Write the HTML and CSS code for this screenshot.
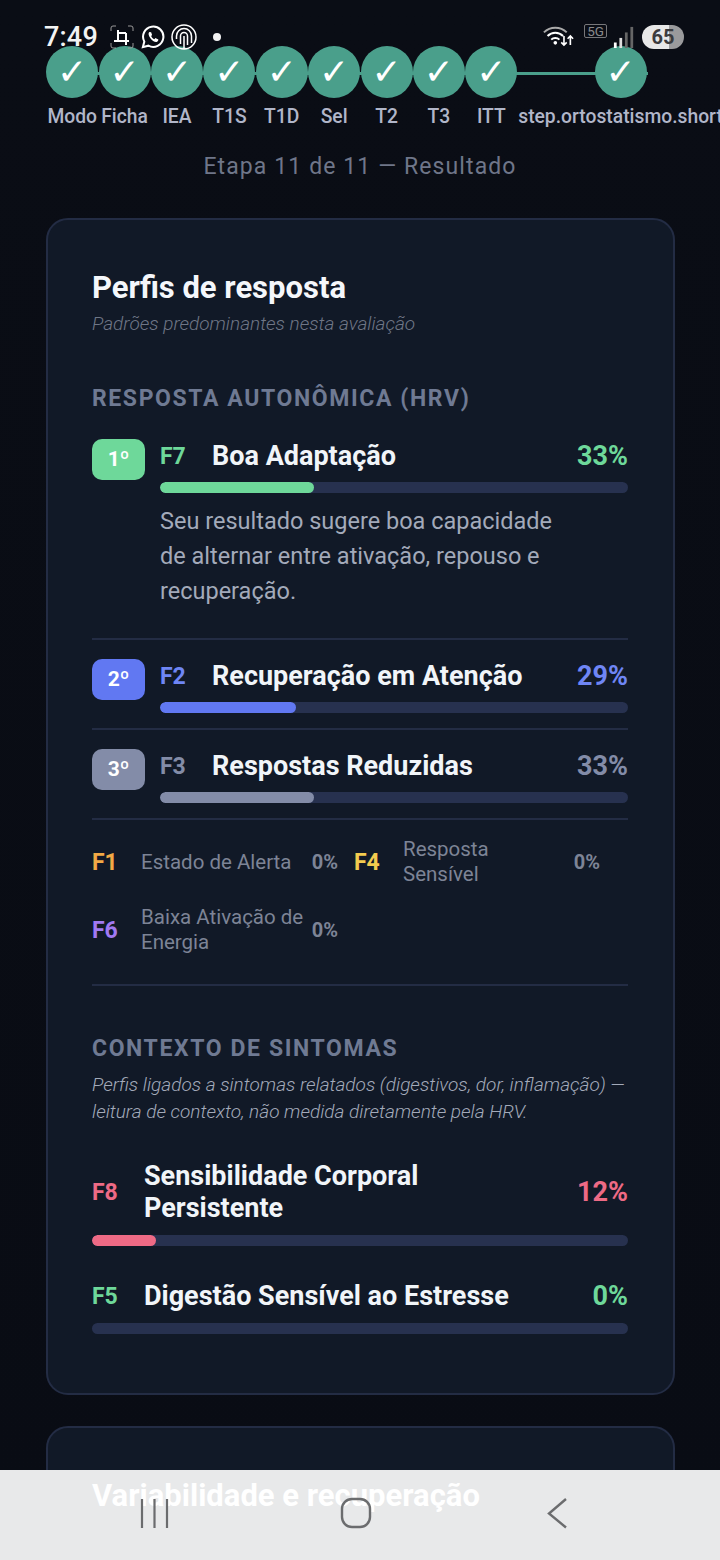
FILE: index.html
```html
<!DOCTYPE html>
<html lang="pt-BR">
<head>
    <meta charset="UTF-8">
    <meta name="viewport" content="width=device-width, initial-scale=1.0">
    <title>Resultado</title>
    <link rel="stylesheet" href="styles.css">
</head>
<body>
<div class="status-bar">
    <span class="clock">7:49</span>
    <svg class="st-crop" width="24" height="24" viewBox="0 0 24 24" fill="none" stroke="#fff" stroke-width="2">
        <path d="M1 6V3q0-2 2-2h3M18 1h3q2 0 2 2v3M23 18v3q0 2-2 2h-3M6 23H3q-2 0-2-2v-3" stroke-width="1" stroke="#999"/>
        <path d="M4 16h15M8 5v11M8 8h8M16 8v12"/>
    </svg>
    <svg class="st-wa" width="24" height="24" viewBox="0 0 26 26" fill="none" stroke="#fff" stroke-width="2.200">
        <path d="M2 24l1.600-6A11 11 0 1 1 8 22.400z"/>
        <path d="M9 7.500c-1.200 1-1.200 3.500 1 6.500s5 4.800 7 4.300c1.200-.3 1.800-1.500 1.800-2.600l-3.200-1.600-1.100 1.300c-1.500-.5-3-2-3.500-3.500l1-1.200-1-2.800z" fill="#fff" stroke="none"/>
    </svg>
    <svg class="st-at" width="26" height="26" viewBox="0 0 26 26" fill="none" stroke="#fff" stroke-width="1.500">
        <circle cx="13" cy="13" r="12"/>
        <path d="M5.500 15v-3a7.500 7.500 0 0 1 15 0v7"/>
        <path d="M9.500 20v-8a3.500 3.500 0 0 1 7 0v9"/>
        <path d="M13 12v13"/>
    </svg>
    <span class="dot"></span>
    <span class="st-spacer"></span>
    <svg class="st-wifi" width="31" height="22" viewBox="0 0 34 24" fill="none" stroke="#fff" stroke-width="2.200">
        <path d="M1 8a18 18 0 0 1 25 0" stroke="#aaa"/>
        <path d="M5 12a12 12 0 0 1 17 0"/>
        <path d="M9 16a6.500 6.500 0 0 1 9 0"/>
        <circle cx="13.500" cy="19.500" r="2" fill="#fff" stroke="none"/>
        <path d="M23 12v10M20 19l3 3 3-3M30 22V12M27 15l3-3 3 3" stroke-width="1.800"/>
    </svg>
    <span class="st-5g">5G</span>
    <svg class="st-signal" width="22" height="22" viewBox="0 0 22 24">
        <rect x="0" y="18" width="3" height="6" fill="#fff"/>
        <rect x="6" y="13" width="3" height="11" fill="#ddd"/>
        <rect x="12" y="7" width="3" height="17" fill="#666"/>
        <rect x="18" y="1" width="3" height="23" fill="#666"/>
    </svg>
    <span class="battery">65</span>
</div>

<div class="stepper">
    <div class="step"><span class="step-dot">✓</span><span class="step-label">Modo</span></div>
    <div class="step"><span class="step-dot">✓</span><span class="step-label">Ficha</span></div>
    <div class="step"><span class="step-dot">✓</span><span class="step-label">IEA</span></div>
    <div class="step"><span class="step-dot">✓</span><span class="step-label">T1S</span></div>
    <div class="step"><span class="step-dot">✓</span><span class="step-label">T1D</span></div>
    <div class="step"><span class="step-dot">✓</span><span class="step-label">Sel</span></div>
    <div class="step"><span class="step-dot">✓</span><span class="step-label">T2</span></div>
    <div class="step"><span class="step-dot">✓</span><span class="step-label">T3</span></div>
    <div class="step"><span class="step-dot">✓</span><span class="step-label">ITT</span></div>
    <div class="step step-last"><span class="step-dot">✓</span><span class="step-label">step.ortostatismo.short</span></div>
</div>
<p class="step-caption">Etapa 11 de 11 — Resultado</p>

<section class="card">
    <h2 class="card-title">Perfis de resposta</h2>
    <p class="card-sub">Padrões predominantes nesta avaliação</p>

    <h3 class="section-head">RESPOSTA AUTONÔMICA (HRV)</h3>

    <div class="rank-row">
        <div class="rank rank-green">1º</div>
        <div class="rank-body">
            <div class="profile-head">
                <span class="code c-green">F7</span>
                <span class="profile-name">Boa Adaptação</span>
                <span class="pct c-green">33%</span>
            </div>
            <div class="bar"><div class="fill bg-green" style="width:33%"></div></div>
            <p class="profile-desc">Seu resultado sugere boa capacidade de alternar entre ativação, repouso e recuperação.</p>
        </div>
    </div>
    <div class="rank-row rank-second">
        <div class="rank rank-blue">2º</div>
        <div class="rank-body">
            <div class="profile-head">
                <span class="code c-blue">F2</span>
                <span class="profile-name">Recuperação em Atenção</span>
                <span class="pct c-blue">29%</span>
            </div>
            <div class="bar"><div class="fill bg-blue" style="width:29%"></div></div>
        </div>
    </div>
    <div class="rank-row rank-third">
        <div class="rank rank-gray">3º</div>
        <div class="rank-body">
            <div class="profile-head">
                <span class="code c-gray">F3</span>
                <span class="profile-name">Respostas Reduzidas</span>
                <span class="pct c-gray">33%</span>
            </div>
            <div class="bar"><div class="fill bg-gray" style="width:33%"></div></div>
        </div>
    </div>

    <div class="minor-grid">
        <div class="minor"><span class="minor-code c-orange">F1</span><span class="minor-name">Estado de Alerta</span><span class="minor-pct">0%</span></div>
        <div class="minor"><span class="minor-code c-yellow">F4</span><span class="minor-name minor-narrow">Resposta Sensível</span><span class="minor-pct">0%</span></div>
        <div class="minor"><span class="minor-code c-purple">F6</span><span class="minor-name">Baixa Ativação de Energia</span><span class="minor-pct">0%</span></div>
    </div>

    <h3 class="section-head section-context">CONTEXTO DE SINTOMAS</h3>
    <p class="context-note">Perfis ligados a sintomas relatados (digestivos, dor, inflamação) — leitura de contexto, não medida diretamente pela HRV.</p>

    <div class="context-item">
        <div class="profile-head">
            <span class="code c-red">F8</span>
            <span class="profile-name">Sensibilidade Corporal<br>Persistente</span>
            <span class="pct c-red">12%</span>
        </div>
        <div class="bar"><div class="fill bg-red" style="width:12%"></div></div>
    </div>
    <div class="context-item context-last">
        <div class="profile-head">
            <span class="code c-green">F5</span>
            <span class="profile-name">Digestão Sensível ao Estresse</span>
            <span class="pct c-green">0%</span>
        </div>
        <div class="bar"></div>
    </div>
</section>

<section class="card card-next">
    <h2 class="card-title over-nav">Variabilidade e recuperação</h2>
    <div class="metric over-nav"><span>RMSSD T1S (sentado)</span><span class="metric-val">30.1</span></div>
</section>

<div class="nav-bg"></div>
<div class="nav-icons">
    <svg width="32" height="32" viewBox="0 0 32 32" fill="none" stroke="#6b6c6e" stroke-width="2.200"><path d="M3 2v29M15.500 2v29M28 2v29"/></svg>
    <svg width="32" height="32" viewBox="0 0 32 32" fill="none" stroke="#6b6c6e" stroke-width="2.400"><rect x="2" y="2" width="28" height="28" rx="10"/></svg>
    <svg width="32" height="32" viewBox="0 0 32 32" fill="none" stroke="#6b6c6e" stroke-width="2.400"><path d="M22 2L5 16.500 22 30.500"/></svg>
</div>
</body>
</html>
```

FILE: styles.css
```css
* { box-sizing: border-box; }
html, body { margin: 0; height: 1560px; overflow: hidden; }
body {
    position: relative;
    font-family: Roboto, "Noto Sans", sans-serif;
    background: linear-gradient(180deg, #0a0d15 0%, #090c14 100%);
    color: #f1f5f9;
    padding-top: 46px;
}

/* status bar */
.status-bar {
    position: absolute; top: 24px; left: 44px; width: 640px; height: 26px;
    display: flex; align-items: center; z-index: 5;
}
.clock { font-size: 27px; font-weight: 500; color: #f3f3f3; width: 66px; letter-spacing: 0.2px; }
.st-crop { flex: none; margin-right: 7px; }
.st-wa { flex: none; margin-right: 6px; }
.st-at { flex: none; }
.dot { width: 8px; height: 8px; border-radius: 50%; background: #f3f3f3; margin-left: 16px; }
.st-spacer { flex: 1; }
.st-wifi { margin-right: 10px; margin-top: -3px; }
.st-5g { font-size: 13.500px; color: #8a8a8c; border: 1px solid #77777a; border-radius: 2px; padding: 0 2px; line-height: 12px; margin-top: -13px; margin-right: 6px; }
.st-signal { margin-right: 7px; }
.battery {
    width: 42px; height: 24px; border-radius: 12px;
    background: linear-gradient(90deg, #e8e8e8 65%, #9a9a9c 65%);
    color: #3b3b3d; font-size: 20px; font-weight: 700; text-align: center; line-height: 24px;
}

/* stepper */
.stepper { position: relative; display: flex; padding-left: 46px; width: 720px; overflow: hidden; }
.stepper::before {
    content: ""; position: absolute; left: 70px; width: 578px; top: 25.500px; height: 3px; background: #4a9f8b;
}
.step { position: relative; width: 52.400px; flex: none; display: flex; flex-direction: column; align-items: center; }
.step-last { width: 206px; }
.step-dot {
    width: 52px; height: 52px; border-radius: 50%; background: #4a9f8b; flex: none;
    color: #fff; font-size: 36px; font-weight: 700; line-height: 52px; text-align: center;
    font-family: "DejaVu Sans", sans-serif;
}
.step-label { margin-top: 8px; font-size: 19.300px; font-weight: 500; line-height: 22px; color: #b1b6c9; white-space: nowrap; }
.step-caption { margin: 24px 0 0; text-align: center; font-size: 23px; line-height: 30px; letter-spacing: 1.100px; color: #6f7689; }

/* cards */
.card {
    margin: 36px 45px 0 46px; padding: 48px 45px 59px 44px;
    background: #111927; border: 2px solid #232c44; border-radius: 22px;
}
.card-next { margin-top: 31px; height: 200px; }
.card-title { margin: 0; font-size: 31px; line-height: 40px; font-weight: 700; color: #f5f7fb; }
.card-sub { margin: 4px 0 0; font-size: 19px; line-height: 24px; font-style: italic; font-weight: 300; color: #6f7686; }
.section-head { margin: 48px 0 0; font-size: 23px; line-height: 30px; font-weight: 700; letter-spacing: 1.600px; color: #6f7a93; }

/* ranked profiles */
.rank-row { display: flex; gap: 15px; margin-top: 25px; padding-bottom: 29px; border-bottom: 2px solid #232c44; }
.rank-second { margin-top: 19px; padding-bottom: 15px; }
.rank-third { margin-top: 19px; padding-bottom: 15px; }
.rank { width: 53px; height: 41px; border-radius: 10px; flex: none; text-align: center; color: #fff; font-size: 21px; font-weight: 700; line-height: 41px; }
.rank-green { background: #6ed89a; }
.rank-blue { background: #6178f2; }
.rank-gray { background: #838ca8; }
.rank-body { flex: 1; min-width: 0; padding-top: 1px; }
.profile-head { display: flex; align-items: center; min-height: 32px; }
.code { width: 52px; flex: none; font-size: 23px; font-weight: 700; }
.profile-name { flex: 1; font-size: 27px; line-height: 32px; font-weight: 700; color: #f1f5f9; }
.pct { font-size: 27px; font-weight: 700; }
.bar { height: 11px; border-radius: 6px; background: #27314f; margin-top: 10px; overflow: hidden; }
.fill { height: 100%; border-radius: 6px; }
.profile-desc { margin: 11px 0 0; max-width: 410px; font-size: 23.500px; line-height: 35px; color: #a3aaba; }

.c-green { color: #6ed89a; }
.c-blue { color: #6f86f5; }
.c-gray { color: #838ca8; }
.c-orange { color: #f2a945; }
.c-yellow { color: #f3cb4f; }
.c-purple { color: #a179f2; }
.c-red { color: #ee6a85; }
.bg-green { background: #6ed89a; }
.bg-blue { background: #6178f2; }
.bg-gray { background: #838ca8; }
.bg-red { background: #ee6a85; }

/* small profiles */
.minor-grid {
    display: grid; grid-template-columns: 246px 246px; column-gap: 16px; row-gap: 18px;
    padding: 17px 0 29px; border-bottom: 2px solid #232c44;
}
.minor { display: flex; align-items: center; min-height: 50px; }
.minor-code { width: 49px; flex: none; font-size: 23px; font-weight: 700; }
.minor-name { flex: 1; font-size: 20.500px; line-height: 25px; color: #7d8496; }
.minor-narrow { max-width: 130px; }
.minor-pct { margin-left: auto; font-size: 20px; font-weight: 700; color: #7d8496; }

/* context */
.section-context { margin-top: 48px; }
.context-note { margin: 7px 0 0; font-size: 19px; line-height: 27px; font-style: italic; font-weight: 300; color: #a3aaba; }
.context-item { margin-top: 35px; }
.context-item .bar { margin-top: 11px; }
.context-last { margin-top: 34px; }

.metric { display: flex; justify-content: space-between; margin-top: 46px; padding-right: 50px; font-size: 25px; }
.metric-val { font-weight: 700; }

/* bottom nav drawn over the page */
.nav-bg { position: absolute; left: 0; right: 0; top: 1470px; height: 90px; background: #e8e9ea; z-index: 1; }
.over-nav { position: relative; z-index: 2; color: #fff; }
.nav-icons {
    position: absolute; left: 0; right: 0; top: 1497px; height: 32px; z-index: 3;
    display: grid; grid-template-columns: 310px 220px 190px;
}
.nav-icons svg:first-child { margin-left: 139px; }
.nav-icons svg:nth-child(2) { margin-left: 30px; }
.nav-icons svg:nth-child(3) { margin-left: 14px; }
```
